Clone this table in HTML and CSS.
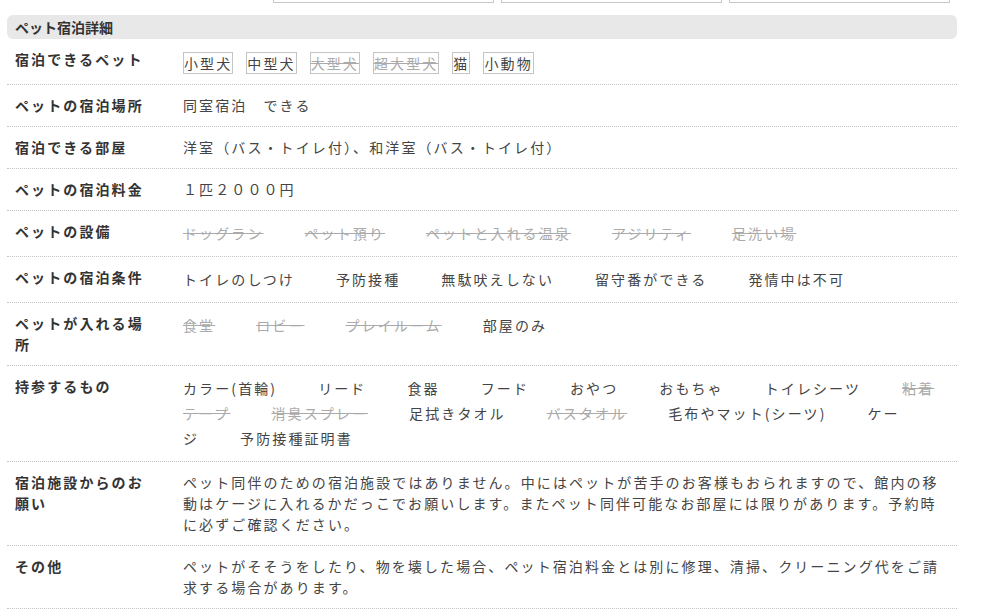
FILE: index.html
```html
<!DOCTYPE html>
<html lang="ja">
<head>
<meta charset="utf-8">
<title>ペット宿泊詳細</title>
<link rel="stylesheet" href="styles.css">
</head>
<body>
<div class="page">
  <div class="inputs">
    <div class="input-box"></div>
    <div class="input-box"></div>
    <div class="input-box"></div>
  </div>
  <h2 class="section-title">ペット宿泊詳細</h2>
  <dl class="detail">
    <div class="row">
      <dt class="label">宿泊できるペット</dt>
      <dd class="value list"><span class="tag">小型犬</span><span class="tag">中型犬</span><span class="tag off">大型犬</span><span class="tag off">超大型犬</span><span class="tag">猫</span><span class="tag">小動物</span></dd>
    </div>
    <div class="row">
      <dt class="label">ペットの宿泊場所</dt>
      <dd class="value">同室宿泊　できる</dd>
    </div>
    <div class="row">
      <dt class="label">宿泊できる部屋</dt>
      <dd class="value">洋室（バス・トイレ付）、和洋室（バス・トイレ付）</dd>
    </div>
    <div class="row">
      <dt class="label">ペットの宿泊料金</dt>
      <dd class="value">１匹２０００円</dd>
    </div>
    <div class="row">
      <dt class="label">ペットの設備</dt>
      <dd class="value list"><span class="item off">ドッグラン</span><span class="item off">ペット預り</span><span class="item off">ペットと入れる温泉</span><span class="item off">アジリティ</span><span class="item off">足洗い場</span></dd>
    </div>
    <div class="row">
      <dt class="label">ペットの宿泊条件</dt>
      <dd class="value list"><span class="item">トイレのしつけ</span><span class="item">予防接種</span><span class="item">無駄吠えしない</span><span class="item">留守番ができる</span><span class="item">発情中は不可</span></dd>
    </div>
    <div class="row">
      <dt class="label">ペットが入れる場所</dt>
      <dd class="value list"><span class="item off">食堂</span><span class="item off">ロビー</span><span class="item off">プレイルーム</span><span class="item">部屋のみ</span></dd>
    </div>
    <div class="row">
      <dt class="label">持参するもの</dt>
      <dd class="value list"><span class="item">カラー(首輪)</span><span class="item">リード</span><span class="item">食器</span><span class="item">フード</span><span class="item">おやつ</span><span class="item">おもちゃ</span><span class="item">トイレシーツ</span><span class="item off">粘着テープ</span><span class="item off">消臭スプレー</span><span class="item">足拭きタオル</span><span class="item off">バスタオル</span><span class="item">毛布やマット(シーツ)</span><span class="item">ケージ</span><span class="item">予防接種証明書</span></dd>
    </div>
    <div class="row">
      <dt class="label">宿泊施設からのお願い</dt>
      <dd class="value">ペット同伴のための宿泊施設ではありません。中にはペットが苦手のお客様もおられますので、館内の移動はケージに入れるかだっこでお願いします。またペット同伴可能なお部屋には限りがあります。予約時に必ずご確認ください。</dd>
    </div>
    <div class="row">
      <dt class="label">その他</dt>
      <dd class="value">ペットがそそうをしたり、物を壊した場合、ペット宿泊料金とは別に修理、清掃、クリーニング代をご請求する場合があります。</dd>
    </div>
  </dl>
</div>
</body>
</html>
```

FILE: styles.css
```css
html, body {
  margin: 0;
  padding: 0;
  background: #ffffff;
}

body {
  font-family: "Noto Sans CJK JP", "Noto Sans", sans-serif;
  font-size: 14px;
  color: #444444;
}

.page {
  width: 950px;
  margin-left: 7px;
}

.inputs {
  display: flex;
  justify-content: flex-end;
  gap: 7px;
  padding-right: 7px;
  height: 3px;
}

.input-box {
  width: 219px;
  height: 2px;
  border: 1px solid #c8c8c8;
  border-top: none;
}

.section-title {
  margin: 12px 0 0 0;
  height: 24px;
  line-height: 24px;
  padding-left: 8px;
  background: #e8e8e8;
  border-radius: 6px;
  font-size: 14px;
  font-weight: bold;
  color: #333333;
}

.detail {
  margin: 0;
}

.row {
  display: grid;
  grid-template-columns: 176px 1fr;
  padding: 10px 11px 10px 0;
  border-bottom: 1px dotted #c4c4c4;
}

.label {
  margin: 0;
  padding: 0 32px 0 8px;
  font-weight: bold;
  color: #333333;
  line-height: 21px;
  letter-spacing: 0.15em;
}

.value {
  margin: 0;
  line-height: 21px;
  letter-spacing: 0.15em;
  color: #444444;
}

.value.list {
  line-height: 25px;
}

.item {
  margin-right: 41px;
}

.tag {
  display: inline-block;
  line-height: 20px;
  border: 1px solid #c4c4c4;
  margin-right: 13px;
  vertical-align: middle;
}

.off {
  color: #aaaaaa;
  text-decoration: line-through;
}
```
